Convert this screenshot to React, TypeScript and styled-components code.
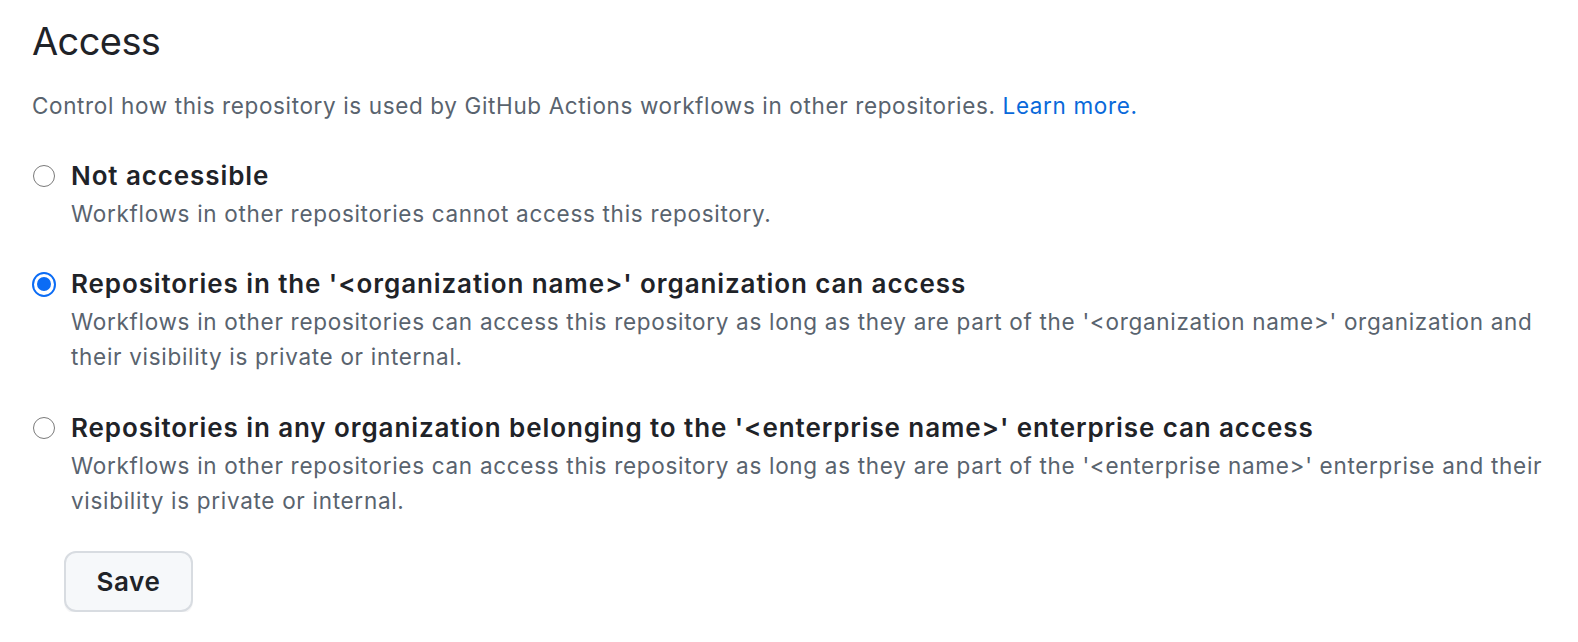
import React, { useState } from "react";
import styled, { createGlobalStyle } from "styled-components";

const GlobalStyle = createGlobalStyle`
  html, body {
    margin: 0;
    padding: 0;
    background: #ffffff;
  }
  body {
    font-family: Inter, "Liberation Sans", Arial, sans-serif;
    color: #1f2328;
  }
`;

const Page = styled.div`
  padding: 16px 32px 0 32px;
  display: flex;
  flex-direction: column;
`;

const Heading = styled.h2`
  margin: 0;
  font-size: 38px;
  line-height: 50px;
  font-weight: 400;
  letter-spacing: -0.6px;
  color: #1f2328;
`;

const Intro = styled.p`
  margin: 22px 0 0 0;
  font-size: 22.5px;
  line-height: 35px;
  letter-spacing: 0.63px;
  color: #59636e;
`;

const Link = styled.a`
  color: #0969da;
  text-decoration: none;
`;

const Options = styled.div`
  display: flex;
  flex-direction: column;
  gap: 33px;
  margin-top: 33px;
`;

const Option = styled.label`
  display: grid;
  grid-template-columns: 24px 1fr;
  column-gap: 15px;
  cursor: pointer;
`;

const RadioBox = styled.span`
  height: 40px;
  display: flex;
  align-items: center;
  justify-content: center;
`;

const RadioRing = styled.span<{ $checked: boolean }>`
  box-sizing: border-box;
  width: ${(p) => (p.$checked ? "25px" : "22px")};
  height: ${(p) => (p.$checked ? "25px" : "22px")};
  border-radius: 50%;
  border: ${(p) => (p.$checked ? "2px solid #0b6cf5" : "1.5px solid #7a7a7a")};
  background: #fff;
  display: flex;
  align-items: center;
  justify-content: center;
`;

const RadioDot = styled.span`
  width: 14px;
  height: 14px;
  border-radius: 50%;
  background: #0b6cf5;
`;

const OptionText = styled.span`
  display: flex;
  flex-direction: column;
`;

const OptionTitle = styled.span`
  font-size: 26px;
  line-height: 40px;
  font-weight: 600;
  letter-spacing: 0.9px;
  color: #1f2328;
`;

const OptionDesc = styled.span`
  font-size: 22.5px;
  line-height: 35.2px;
  letter-spacing: 0.7px;
  color: #59636e;
`;

const SaveButton = styled.button`
  margin: 33px 0 0 32px;
  align-self: flex-start;
  width: 129px;
  height: 61px;
  border: 2px solid #d8dce1;
  border-radius: 12px;
  background: #f6f8fa;
  box-shadow: 0 2px 0 rgba(31, 35, 40, 0.04);
  font-family: inherit;
  font-size: 26px;
  font-weight: 600;
  letter-spacing: 0.6px;
  color: #1f2328;
  cursor: pointer;
`;

const options = [
  {
    id: "none",
    title: "Not accessible",
    desc: "Workflows in other repositories cannot access this repository.",
  },
  {
    id: "org",
    title: "Repositories in the '<organization name>' organization can access",
    desc: "Workflows in other repositories can access this repository as long as they are part of the '<organization name>' organization and their visibility is private or internal.",
  },
  {
    id: "enterprise",
    title:
      "Repositories in any organization belonging to the '<enterprise name>' enterprise can access",
    desc: "Workflows in other repositories can access this repository as long as they are part of the '<enterprise name>' enterprise and their visibility is private or internal.",
  },
];

export default function App() {
  const [selected, setSelected] = useState("org");

  return (
    <>
      <GlobalStyle />
      <Page>
        <Heading>Access</Heading>
        <Intro>
          Control how this repository is used by GitHub Actions workflows in other
          repositories. <Link href="#">Learn more.</Link>
        </Intro>

        <Options>
          {options.map((o) => (
            <Option key={o.id} onClick={() => setSelected(o.id)}>
              <RadioBox>
                <RadioRing $checked={selected === o.id}>
                  {selected === o.id && <RadioDot />}
                </RadioRing>
              </RadioBox>
              <OptionText>
                <OptionTitle>{o.title}</OptionTitle>
                <OptionDesc>{o.desc}</OptionDesc>
              </OptionText>
            </Option>
          ))}
        </Options>

        <SaveButton>Save</SaveButton>
      </Page>
    </>
  );
}
